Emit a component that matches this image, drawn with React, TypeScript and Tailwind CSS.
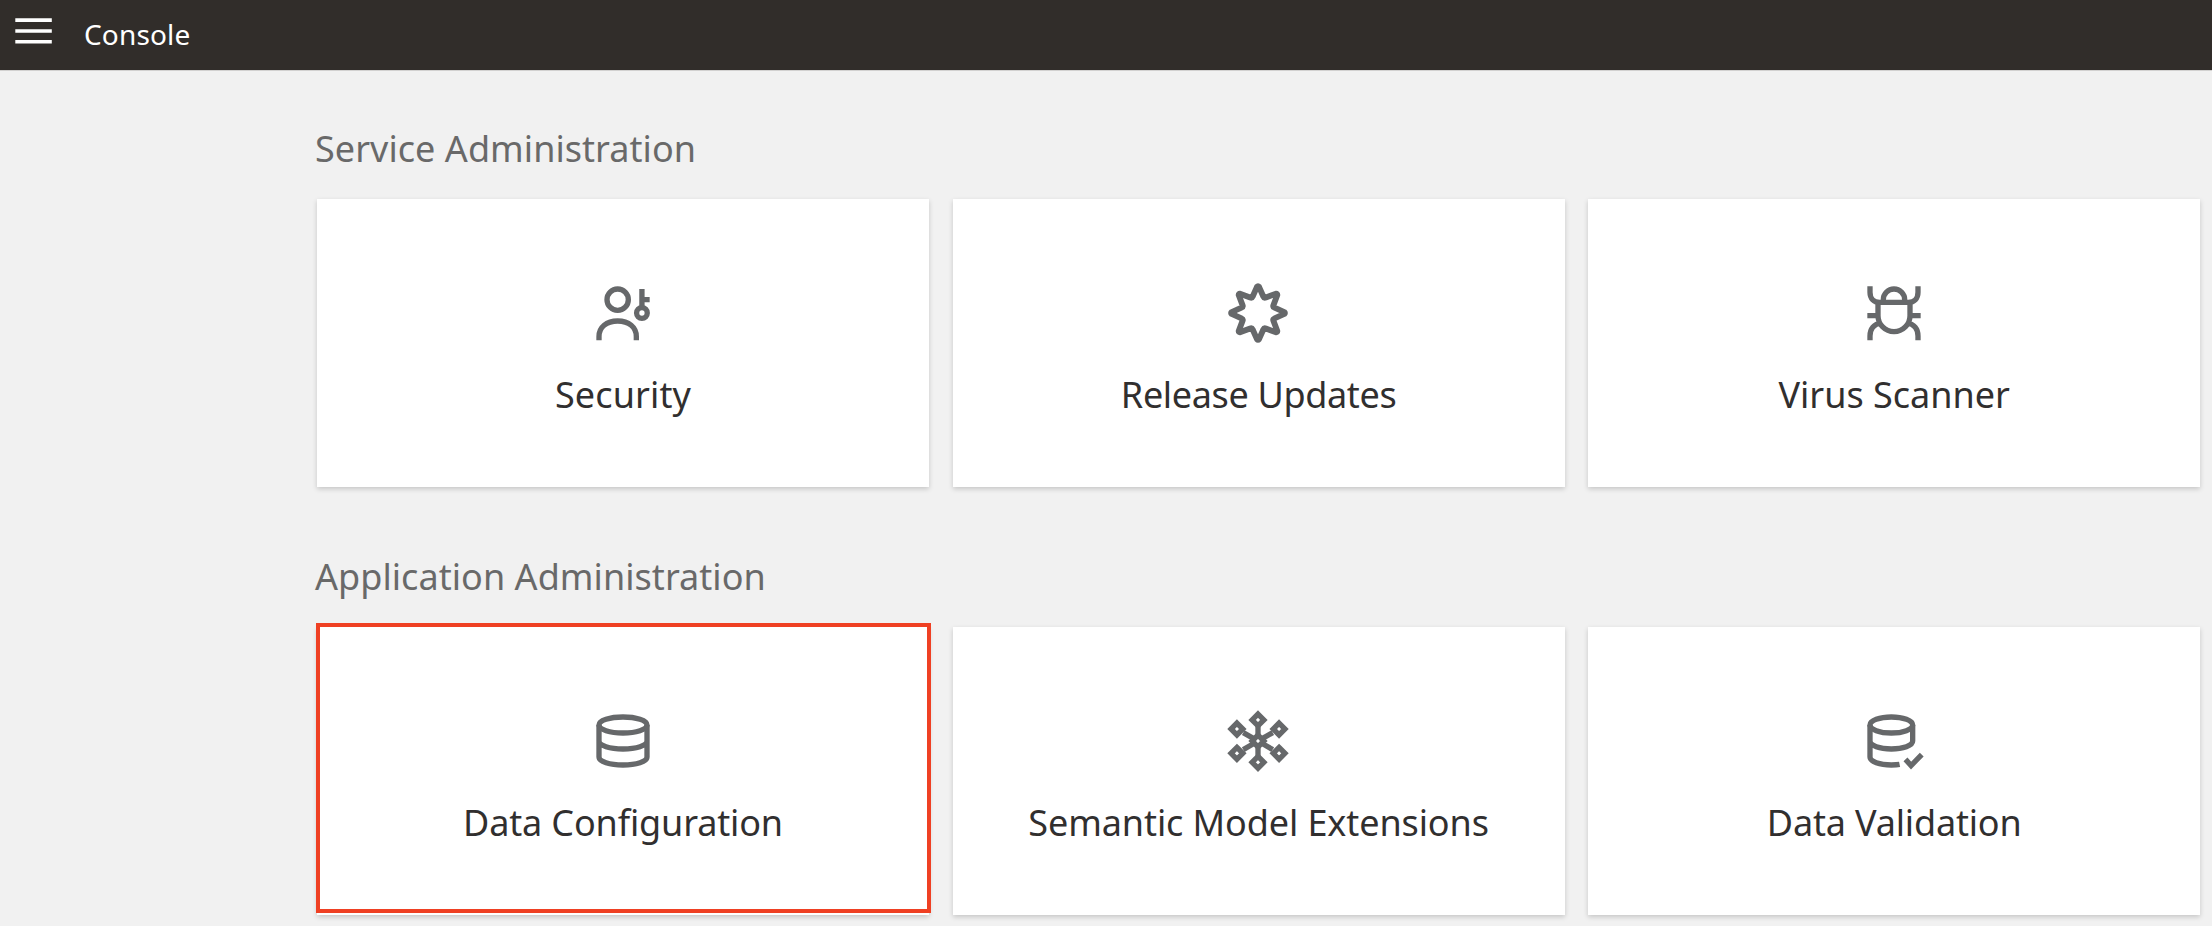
import type { ReactNode } from "react";

const point = (radius: number, degrees: number) => {
  const a = (degrees * Math.PI) / 180;
  return [12 + radius * Math.sin(a), 12 - radius * Math.cos(a)];
};

const starPath = (() => {
  const f = (p: number[]) => p.map((n) => n.toFixed(2)).join(" ");
  const mix = (a: number[], b: number[], t: number) => [a[0] + (b[0] - a[0]) * t, a[1] + (b[1] - a[1]) * t];
  let d = "";
  for (let i = 0; i < 8; i++) {
    const left = point(9.9, i * 45 - 2);
    const right = point(9.9, i * 45 + 2);
    const valley = point(6, i * 45 + 22.5);
    const next = point(9.9, i * 45 + 43);
    d += `${i ? "L" : "M"}${f(left)} Q${f(point(10.3, i * 45))} ${f(right)} L${f(mix(right, valley, 0.85))} Q${f(valley)} ${f(mix(valley, next, 0.15))} `;
  }
  return d + "Z";
})();

const nodes = [
  [12, 4.1],
  [19.9, 7.5],
  [19.9, 16.6],
  [12, 20],
  [4.1, 16.6],
  [4.1, 7.5],
];

function Icon({ children, className = "" }: { children: ReactNode; className?: string }) {
  return (
    <svg className={`size-16 shrink-0 ${className}`} viewBox="0 0 24 24" fill="none" stroke="#66686a" strokeWidth={2}>
      {children}
    </svg>
  );
}

const icons = {
  security: (
    <Icon>
      <circle cx="10" cy="7" r="4" />
      <path d="M3 22.2v-1.4C3 17.3 5.8 15 10 15s7 2.3 7 5.8v1.4M19.1 3v7M19.1 7H22" />
      <circle cx="19.1" cy="12" r="2" />
    </Icon>
  ),
  release: (
    <Icon className="-ml-[1.5px]">
      <path d={starPath} strokeWidth={2.2} strokeLinejoin="round" />
    </Icon>
  ),
  virus: (
    <Icon>
      <path d="M8 8V7a4 4 0 0 1 8 0v1M6 8h12v5a6 6 0 0 1-12 0zM3 2v2.2C3 6.5 4.4 8 6.6 8M21 2v2.2C21 6.5 19.6 8 17.4 8M2 13h4M18 13h4M3 22.2v-1.6c0-2.6 1.5-4.4 4-4.9M21 22.2v-1.6c0-2.6-1.5-4.4-4-4.9" />
    </Icon>
  ),
  database: (
    <Icon>
      <ellipse cx="12" cy="6" rx="9" ry="3" />
      <path d="M3 6v6c0 1.7 4 3 9 3s9-1.3 9-3V6M3 12v6c0 1.7 4 3 9 3s9-1.3 9-3v-6" />
    </Icon>
  ),
  semantic: (
    <Icon className="-ml-[1.5px]">
      {nodes.map(([x, y]) => (
        <g key={`${x}-${y}`}>
          <path d={`M${x + (12 - x) * 0.3} ${y + (12 - y) * 0.3}L${12 + (x - 12) * 0.18} ${12 + (y - 12) * 0.18}`} />
          <path d={`M${x} ${y - 2.2}l2.2 2.2l-2.2 2.2l-2.2-2.2z`} />
        </g>
      ))}
      <path d="M12 9.8l2.2 2.2l-2.2 2.2l-2.2-2.2z" />
    </Icon>
  ),
  validation: (
    <Icon>
      <ellipse cx="11" cy="6" rx="8" ry="3" />
      <path d="M3 6v6c0 1.7 3.6 3 8 3s8-1.3 8-3V6M3 12v6c0 1.7 3.6 3 8 3 1.1 0 2.1 0 3.1-.2M16.3 18.9l2.1 2.3 4-4.1" />
    </Icon>
  ),
};

type CardProps = { icon: ReactNode; title: string; tracking?: string; selected?: boolean };

function Card({ icon, title, tracking = "", selected }: CardProps) {
  return (
    <div className="relative flex h-72 flex-col items-center gap-[26px] bg-white pt-[82px] shadow-[0_2px_5px_rgba(0,0,0,0.18)]">
      {icon}
      <h3 className={`text-[36px] leading-[48px] whitespace-nowrap text-[#312f2f] ${tracking}`}>{title}</h3>
      {selected && <div className="absolute -top-1 -right-0.5 bottom-0.5 -left-px border-4 border-[#ef4023]" />}
    </div>
  );
}

function Section({ title, children }: { title: string; children: ReactNode }) {
  return (
    <section className="flex flex-col gap-[26px]">
      <h2 className="-ml-0.5 text-[36px] leading-[48px] tracking-[0.05px] text-[#696969]">{title}</h2>
      <div className="grid grid-cols-[612px_612px_612px] gap-x-[23.6px]">{children}</div>
    </section>
  );
}

export default function App() {
  return (
    <div className="h-[926px] overflow-hidden bg-[#f1f1f1] font-['Noto_Sans',sans-serif]">
      <header className="flex h-[71px] items-center border-b border-[#d2d1d0] bg-[#312d2a] pl-[15px] text-white">
        <svg className="-mt-2 h-[26px] w-[37px]" viewBox="0 0 37 26" fill="currentColor">
          <path d="M.3 .3h36.5v3.6H.3zM.3 11.2h36.5v3.6H.3zM.3 22h36.5v3.6H.3z" />
        </svg>
        <h1 className="-mt-0.5 ml-8 text-[28px] leading-10 tracking-[0.15px]">Console</h1>
      </header>
      <main className="flex flex-col gap-[66px] pt-[54px] pl-[317px]">
        <Section title="Service Administration">
          <Card icon={icons.security} title="Security" tracking="tracking-[0.12px]" />
          <Card icon={icons.release} title="Release Updates" tracking="tracking-[-0.35px]" />
          <Card icon={icons.virus} title="Virus Scanner" />
        </Section>
        <Section title="Application Administration">
          <Card icon={icons.database} title="Data Configuration" tracking="tracking-[-0.15px]" selected />
          <Card icon={icons.semantic} title="Semantic Model Extensions" tracking="tracking-[-0.1px]" />
          <Card icon={icons.validation} title="Data Validation" tracking="tracking-[-0.18px]" />
        </Section>
      </main>
    </div>
  );
}
